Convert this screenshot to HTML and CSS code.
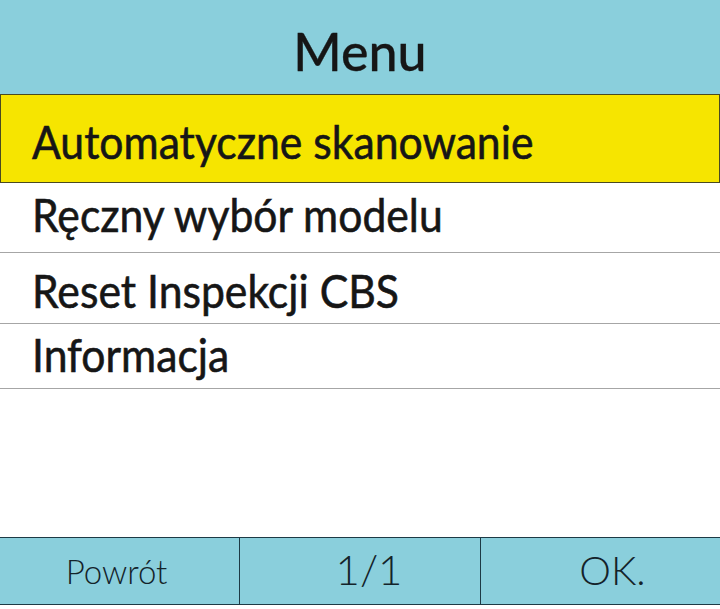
FILE: index.html
```html
<!DOCTYPE html>
<html lang="pl">
<head>
<meta charset="utf-8">
<title>Menu</title>
<link rel="stylesheet" href="styles.css">
</head>
<body>
<div class="screen">
  <header class="title-bar">Menu</header>
  <ul class="menu">
    <li class="item item-1 selected"><span class="label">Automatyczne skanowanie</span></li>
    <li class="item item-2"><span class="label">Ręczny wybór modelu</span></li>
    <li class="item item-3"><span class="label">Reset Inspekcji CBS</span></li>
    <li class="item item-4"><span class="label">Informacja</span></li>
  </ul>
  <div class="spacer"></div>
  <footer class="button-bar">
    <div class="btn btn-back">Powrót</div>
    <div class="btn btn-page">1/1</div>
    <div class="btn btn-ok">OK.</div>
  </footer>
</div>
</body>
</html>
```
FILE: styles.css
```css
html, body {
  margin: 0;
  padding: 0;
  background: #ffffff;
}
.screen {
  width: 720px;
  height: 609px;
  display: flex;
  flex-direction: column;
  font-family: Lato, "Liberation Sans", sans-serif;
  color: #161616;
  overflow: hidden;
}
.title-bar {
  height: 94px;
  box-sizing: border-box;
  background: #8acfdc;
  text-align: center;
  font-size: 52px;
  font-weight: 500;
  line-height: 52px;
  padding-top: 25px;
  -webkit-text-stroke: 0.3px #161616;
}
.menu {
  list-style: none;
  margin: 0;
  padding: 0;
}
.item {
  box-sizing: border-box;
  font-size: 46px;
  line-height: 46px;
  padding-left: 32px;
  border-bottom: 1px solid #a6a6a6;
  white-space: nowrap;
}
.label {
  display: inline-block;
  transform: scaleX(0.928);
  transform-origin: left center;
  -webkit-text-stroke: 0.6px #161616;
}
.selected {
  background: #f6e500;
  border: 1px solid #4a4a20;
  padding-left: 31px;
}
.item-1 { height: 89px; padding-top: 24px; }
.item-2 { height: 70px; padding-top: 9px; }
.item-3 { height: 71px; padding-top: 15px; }
.item-4 { height: 65px; padding-top: 8px; }
.spacer {
  height: 148px;
}
.button-bar {
  height: 68px;
  box-sizing: border-box;
  background: #8acfdc;
  border-top: 1px solid #1d3a45;
  border-bottom: 1px solid #1d3a45;
  display: grid;
  grid-template-columns: 239px 241px 1fr;
}
.btn {
  font-weight: 300;
  line-height: 1;
  display: flex;
  justify-content: center;
  box-sizing: border-box;
  color: #14232a;
}
.btn + .btn {
  border-left: 1px solid #1d3a45;
}
.btn-back { font-size: 33px; padding-top: 17px; padding-right: 6px; }
.btn-page { font-size: 42px; padding-top: 10px; padding-left: 18px; }
.btn-ok { font-size: 40px; padding-top: 12px; padding-left: 24px; }
```
